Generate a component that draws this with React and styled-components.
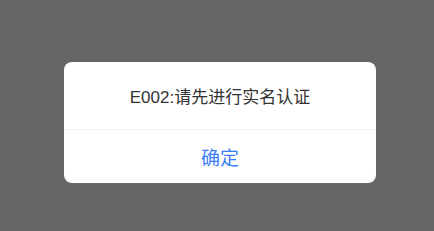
import styled, { createGlobalStyle } from "styled-components";

const GlobalStyle = createGlobalStyle`
  html, body {
    margin: 0;
    padding: 0;
    background: #666666;
  }
  body {
    font-family: "Liberation Sans", "Noto Sans CJK SC", sans-serif;
  }
`;

export default function App() {
  return (
    <>
      <GlobalStyle />
      <Overlay>
        <Dialog>
          <Message>E002:请先进行实名认证</Message>
          <Footer>
            <ConfirmButton>确定</ConfirmButton>
          </Footer>
        </Dialog>
      </Overlay>
    </>
  );
}

const Overlay = styled.div`
  min-height: 231px;
  box-sizing: border-box;
  padding: 62px 0 0 64px;
  display: flex;
  align-items: flex-start;
`;

const Dialog = styled.div`
  width: 312px;
  background: #fff;
  border-radius: 8px;
  overflow: hidden;
  display: flex;
  flex-direction: column;
`;

const Message = styled.div`
  height: 68px;
  display: flex;
  align-items: center;
  justify-content: center;
  font-size: 17px;
  color: #333;
  border-bottom: 1px solid #f2f2f2;
  box-sizing: border-box;
`;

const Footer = styled.div`
  height: 53px;
  display: flex;
`;

const ConfirmButton = styled.button`
  flex: 1;
  border: none;
  background: none;
  font-family: inherit;
  font-size: 19px;
  color: #3a7df6;
  padding: 0;
`;
